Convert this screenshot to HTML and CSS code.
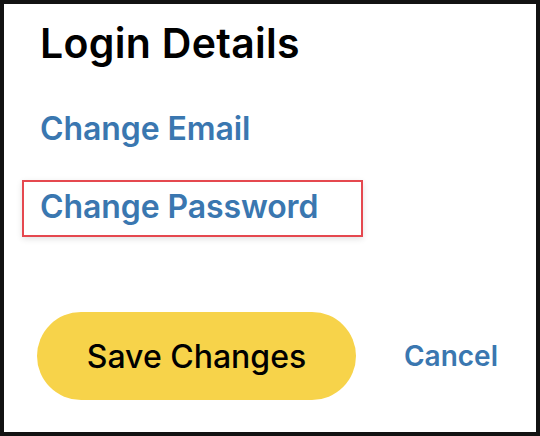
FILE: index.html
```html
<!DOCTYPE html>
<html lang="en">
  <head>
    <meta charset="UTF-8" />
    <meta name="viewport" content="width=device-width, initial-scale=1" />
    <title>Login Details</title>
    <link rel="stylesheet" href="styles.css">
  </head>
  <body>
    <section class="panel">
      <h1 class="panel-title">Login Details</h1>

      <div class="link-list">
        <a class="link-item" href="#">Change Email</a>
        <a class="link-item link-item--focus" href="#">Change Password</a>
      </div>

      <div class="actions">
        <button class="btn-save">Save Changes</button>
        <a class="btn-cancel" href="#">Cancel</a>
      </div>
    </section>
  </body>
</html>
```

FILE: styles.css
```css
/*—— base ——*/
html,
body {
  margin: 0;
  padding: 0;
  height: 100%;
}

body {
  background: #121212;
  padding: 4px;
  box-sizing: border-box;
  font-family: "Inter", "Liberation Sans", sans-serif;
}

/*—— panel ——*/
.panel {
  background: #ffffff;
  height: 100%;
  box-sizing: border-box;
  padding: 15px 38px 0 36px;
  display: flex;
  flex-direction: column;
}

.panel-title {
  margin: 0;
  font-size: 41px;
  line-height: 48px;
  font-weight: 600;
  color: #000000;
  letter-spacing: 0.3px;
}

/*—— links ——*/
.link-list {
  display: flex;
  flex-direction: column;
  align-items: flex-start;
  gap: 31px;
  margin-top: 42px;
}

.link-item {
  font-size: 32px;
  line-height: 40px;
  font-weight: 600;
  color: #3a77b0;
  text-decoration: none;
  letter-spacing: -0.1px;
}

.link-item--focus {
  margin-left: -18px;
  padding: 5px 43px 8px 16px;
  border: 2px solid #e5484f;
  box-shadow: 0 2px 6px rgba(0, 0, 0, 0.12);
}

/*—— actions ——*/
.actions {
  display: flex;
  align-items: center;
  justify-content: space-between;
  margin-top: 75px;
}

.btn-save {
  margin-left: -3px;
  width: 319px;
  height: 88px;
  border: none;
  border-radius: 44px;
  background: #f7d34a;
  font-family: inherit;
  font-size: 32px;
  font-weight: 500;
  color: #000000;
  cursor: pointer;
}

.btn-cancel {
  font-size: 28px;
  font-weight: 600;
  color: #3a77b0;
  text-decoration: none;
}
```
